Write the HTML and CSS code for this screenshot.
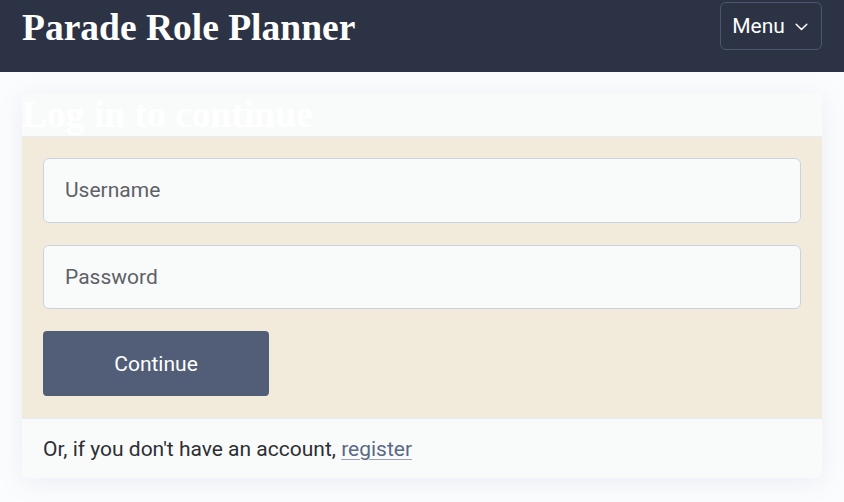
FILE: index.html
```html
<!DOCTYPE html>
<html>
<head>
<meta charset="utf-8">
<link rel="stylesheet" href="styles.css">
</head>
<body>
<header class="topbar">
  <h1 class="brand">Parade Role Planner</h1>
  <button class="menu-btn">Menu
    <svg width="13" height="8" viewBox="0 0 13 8"><path d="M1.2 1.2l5.3 5.3 5.3-5.3" fill="none" stroke="#fff" stroke-width="1.5" stroke-linecap="round" stroke-linejoin="round"/></svg>
  </button>
</header>
<main class="page">
  <section class="card">
    <div class="card-head"><h2 class="card-title">Log in to continue</h2></div>
    <form class="card-body">
      <input class="field" type="text" placeholder="Username">
      <input class="field" type="password" placeholder="Password">
      <button class="submit" type="button">Continue</button>
    </form>
    <div class="card-foot">Or, if you don't have an account, <a href="#" class="link">register</a></div>
  </section>
</main>
</body>
</html>
```
FILE: styles.css
```css
* { box-sizing: border-box; }
body {
  margin: 0;
  background: #fbfcfd;
  font-family: Roboto, "Liberation Sans", sans-serif;
  color: #2d2f33;
}
.topbar {
  height: 72px;
  background: #2c3344;
  display: flex;
  align-items: flex-start;
  justify-content: space-between;
  padding: 0 22px;
}
.brand {
  margin: 0;
  font-family: "Liberation Serif", serif;
  font-weight: bold;
  font-size: 37.5px;
  line-height: 56px;
  color: #fff;
}
.menu-btn {
  margin-top: 2px;
  width: 102px;
  height: 48px;
  background: transparent;
  border: 1px solid #4d5770;
  border-radius: 6px;
  color: #fff;
  font-family: Roboto, sans-serif;
  font-size: 21px;
  display: flex;
  align-items: center;
  justify-content: center;
  gap: 10px;
  padding: 0 2px 0 0;
}
.menu-btn svg { margin-top: 1px; }
.page {
  padding: 21px 22px 24px;
}
.card {
  border-radius: 6px;
  overflow: hidden;
  background: #f9fbfb;
  box-shadow: 0 4px 24px rgba(120, 130, 180, 0.12);
}
.card-head {
  height: 44px;
  border-bottom: 1px solid #e8eef4;
}
.card-title {
  margin: 0;
  font-family: "Liberation Serif", serif;
  font-weight: bold;
  font-size: 37.5px;
  line-height: 44px;
  color: #ffffff;
}
.card-body {
  margin: 0;
  background: #f2eadb;
  padding: 21px 21px 22px;
  display: flex;
  flex-direction: column;
  gap: 22px;
  align-items: flex-start;
  border-bottom: 1px solid #e6ecf4;
}
.field {
  width: 100%;
  height: 64.7px;
  border: 1px solid #cbd3e3;
  border-radius: 6px;
  background: #f9fbfb;
  padding: 0 21px;
  font-family: Roboto, sans-serif;
  font-size: 21px;
  color: #333;
}
.field::placeholder { color: #5e6166; }
.submit {
  width: 226px;
  height: 64.7px;
  border: none;
  border-radius: 4px;
  background: #525e78;
  color: #fff;
  font-family: Roboto, sans-serif;
  font-size: 21px;
}
.card-foot {
  height: 59px;
  padding: 0 21px;
  display: flex;
  align-items: center;
  font-size: 21px;
  color: #2d2f33;
  white-space: pre;
}
.link {
  color: #5b6887;
  text-decoration: underline;
  text-decoration-color: #9aa3b8;
  text-decoration-thickness: 1px;
  text-underline-offset: 3px;
}
```
